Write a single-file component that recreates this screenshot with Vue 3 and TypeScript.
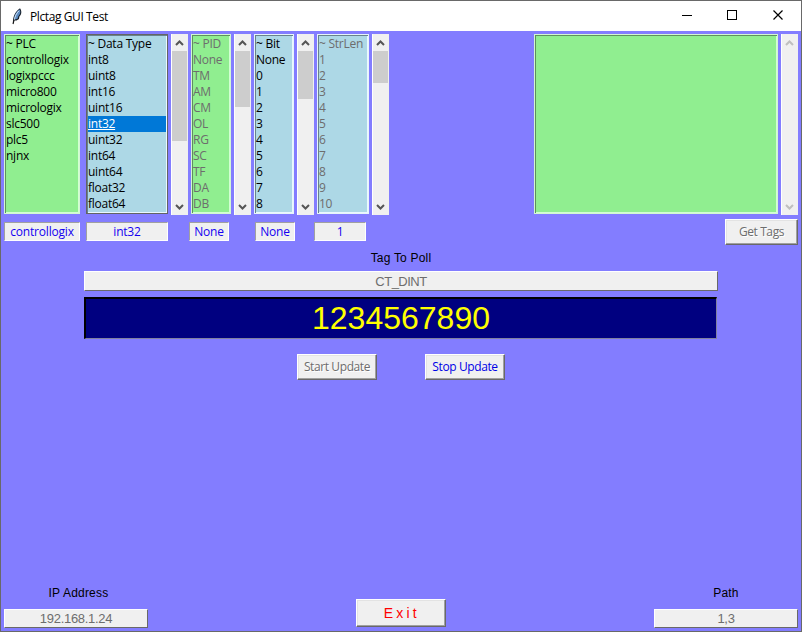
<script setup lang="ts">
interface ListPane {
  id: string
  title: string
  items: string[]
  selected?: string
  value: string
  thumb: number
  disabled: boolean
}

const panes: ListPane[] = [
  { id: 'plc', title: '~ PLC', items: ['controllogix', 'logixpccc', 'micro800', 'micrologix', 'slc500', 'plc5', 'njnx'], value: 'controllogix', thumb: 0, disabled: false },
  { id: 'type', title: '~ Data Type', items: ['int8', 'uint8', 'int16', 'uint16', 'int32', 'uint32', 'int64', 'uint64', 'float32', 'float64'], selected: 'int32', value: 'int32', thumb: 90, disabled: false },
  { id: 'pid', title: '~ PID', items: ['None', 'TM', 'AM', 'CM', 'OL', 'RG', 'SC', 'TF', 'DA', 'DB'], value: 'None', thumb: 56, disabled: true },
  { id: 'bit', title: '~ Bit', items: ['None', '0', '1', '2', '3', '4', '5', '6', '7', '8'], value: 'None', thumb: 48, disabled: false },
  { id: 'strlen', title: '~ StrLen', items: ['1', '2', '3', '4', '5', '6', '7', '8', '9', '10'], value: '1', thumb: 32, disabled: true },
]
</script>

<template>
  <div class="window">
    <header class="titlebar">
      <svg class="feather" width="16" height="18" viewBox="0 0 16 18">
        <path d="M4 16.500 C3.600 11 5.400 5 11 1.200 C13.400 4.400 12.200 8 10.400 9.600 L10 12 L7.600 13.600 L5 13.400 Z" fill="#1a222c" />
        <path d="M5.200 11.200 C5.600 7.600 7.600 4.400 10.600 2.600 C12 5 11 7.800 9.300 9.200 L8.500 11.800 L5.800 12.600 Z" fill="#5a8ac0" />
        <path d="M5.200 13.500 C5.800 9.500 7.400 6.400 10 3.800" fill="none" stroke="#dcecff" stroke-width=".9" />
        <path d="M4 17 L5.200 12.600" stroke="#111" stroke-width="1.1" />
      </svg>
      <span class="caption">Plctag GUI Test</span>
      <svg class="controls" width="138" height="30" viewBox="0 0 138 30" fill="none" stroke="#000" shape-rendering="crispEdges">
        <path d="M18 14.5H28M63.500 9.500H72.500V18.500H63.500Z" />
        <path d="M109.500 9.500L118.500 18.500M118.500 9.500L109.500 18.500" shape-rendering="auto" stroke-width="1.2" />
      </svg>
    </header>

    <main class="body">
      <section class="lists">
        <template v-for="p in panes" :key="p.id">
          <ul class="listbox" :class="[p.id, { disabled: p.disabled }]">
            <li>{{ p.title }}</li>
            <li v-for="item in p.items" :key="item" :class="{ selected: item === p.selected }"><span>{{ item }}</span></li>
          </ul>
          <div v-if="p.thumb" class="scrollbar">
            <svg class="arrow" width="15" height="17" viewBox="0 0 15 17"><path d="M4 11L7.500 7.500L11 11" /></svg>
            <div class="thumb" :style="{ height: p.thumb + 'px' }"></div>
            <svg class="arrow end" width="15" height="17" viewBox="0 0 15 17"><path d="M4 7L7.500 10.500L11 7" /></svg>
          </div>
        </template>
        <ul class="listbox tags"></ul>
        <div class="scrollbar off">
          <svg class="arrow" width="15" height="17" viewBox="0 0 15 17"><path d="M4 11L7.500 7.500L11 11" /></svg>
          <svg class="arrow end" width="15" height="17" viewBox="0 0 15 17"><path d="M4 7L7.500 10.500L11 7" /></svg>
        </div>
      </section>

      <section class="values">
        <div v-for="p in panes" :key="p.id" class="value" :class="'v-' + p.id">{{ p.value }}</div>
        <button class="btn get" disabled>Get Tags</button>
      </section>

      <section class="poll">
        <div class="label">Tag To Poll</div>
        <div class="entry tag">CT_DINT</div>
        <div class="result">1234567890</div>
        <div class="actions">
          <button class="btn" disabled>Start Update</button>
          <button class="btn">Stop Update</button>
        </div>
      </section>

      <footer class="bottom">
        <div class="field">
          <div class="label ip">IP Address</div>
          <div class="entry">192.168.1.24</div>
        </div>
        <button class="btn exit">E x i t</button>
        <div class="field">
          <div class="label">Path</div>
          <div class="entry">1,3</div>
        </div>
      </footer>
    </main>
  </div>
</template>

<style>
body { margin: 0; }
</style>

<style scoped>
* { box-sizing: border-box; }
.window {
  width: 802px; height: 632px; display: flex; flex-direction: column;
  border: 1px solid #696969; background: #837dff;
  font-family: "Open Sans", "Noto Sans", sans-serif; font-size: 12px; color: #000;
}
.titlebar { height: 30px; flex: none; display: flex; align-items: center; background: #fff; }
.feather { margin-left: 8px; }
.caption { margin-left: 5px; letter-spacing: -0.4px; }
.controls { margin-left: auto; margin-right: -1px; }
.body { flex: 1; display: flex; flex-direction: column; padding: 3px; }
.lists { display: flex; height: 181px; }
.listbox {
  height: 180px; margin: 0 3px 0 0; padding: 1px; list-style: none; overflow: hidden; flex: none;
  border: 1px solid #d2f8d2; background: #90ee90; letter-spacing: -0.25px;
  box-shadow: inset 1px 1px #5f8f5f, inset -1px -1px #d2ffd2;
}
.listbox li { height: 16px; line-height: 15px; white-space: nowrap; }
.plc { width: 76px; margin-right: 6px; }
.type { width: 82px; }
.pid { width: 40px; }
.bit { width: 40px; }
.strlen { width: 52px; }
.type, .bit, .strlen { background: #add8e6; border-color: #e6f5fa; box-shadow: inset 1px 1px #68828c, inset -1px -1px #eaf8ff; }
.type { border-color: #646464; }
.disabled { color: #6d6d6d; }
.selected { background: #0078d7; color: #fff; }
.selected span { text-decoration: underline; }
.scrollbar {
  width: 17px; height: 181px; margin-right: 3px; flex: none; display: flex; flex-direction: column;
  background: #f0f0f0; border-left: 1px solid #fff;
}
.thumb { width: 15px; background: #cdcdcd; }
.arrow { display: block; fill: none; stroke: #555; stroke-width: 2; }
.arrow.end { margin-top: auto; }
.off .arrow { stroke: #bfbfbf; }
.tags { width: 244px; margin-left: auto; }
.off { margin-right: 0; }
.values { display: flex; height: 26px; margin-top: 4px; }
.value {
  height: 19px; margin-top: 3px; line-height: 18px; text-align: center; color: #1400f0; letter-spacing: -0.2px;
  background: #f0f0f0; border: 1px solid; border-color: #a0a0a0 #fff #fff #a0a0a0;
}
.v-plc { width: 76px; }
.v-type { width: 82px; margin-left: 6px; }
.v-pid { width: 40px; margin-left: 21px; }
.v-bit { width: 40px; margin-left: 26px; }
.v-strlen { width: 52px; margin-left: 19px; }
.btn {
  width: 80px; height: 26px; padding: 0 0 1px; border: 1px solid; border-color: #fff #696969 #696969 #fff;
  box-shadow: inset -1px -1px #a0a0a0, inset 1px 1px #e3e3e3;
  background: #f0f0f0; color: #0000e6; font: inherit; letter-spacing: -0.4px; white-space: nowrap;
}
.btn:disabled { color: #6d6d6d; text-shadow: 1px 1px #fff; }
.get { width: 73px; margin-left: auto; }
.poll { display: flex; flex-direction: column; align-items: center; padding-top: 5px; }
.label { font-family: "Liberation Sans", sans-serif; font-size: 12px; line-height: 16px; text-align: center; letter-spacing: 0.2px; }
.entry {
  height: 19px; font: 13px/18px "Liberation Sans", sans-serif; text-align: center; color: #6d6d6d; letter-spacing: -0.3px;
  background: #f0f0f0; border: 1px solid; border-color: #fff #696969 #696969 #fff;
}
.tag { width: 634px; height: 20px; margin-top: 5px; line-height: 19px; letter-spacing: -0.5px; }
.result {
  width: 633px; height: 42px; margin-top: 6px; margin-right: 1px; font: 32px/38px "Liberation Sans", sans-serif; text-align: center;
  color: #ff0; background: #000080; border: 2px solid #000; border-right: 1px solid #8080a0; border-bottom: 1px solid #8080a0;
}
.actions { display: flex; gap: 48px; margin-top: 15px; }
.bottom { display: flex; justify-content: space-between; align-items: flex-end; margin-top: auto; }
.field { width: 144px; }
.field .label { margin-bottom: 8px; }
.field .ip { padding-left: 5px; }
.exit { width: 90px; height: 28px; margin-bottom: 1px; padding-right: 2px; color: #f00; font: 14px "Liberation Sans", sans-serif; letter-spacing: -0.35px; }
</style>
